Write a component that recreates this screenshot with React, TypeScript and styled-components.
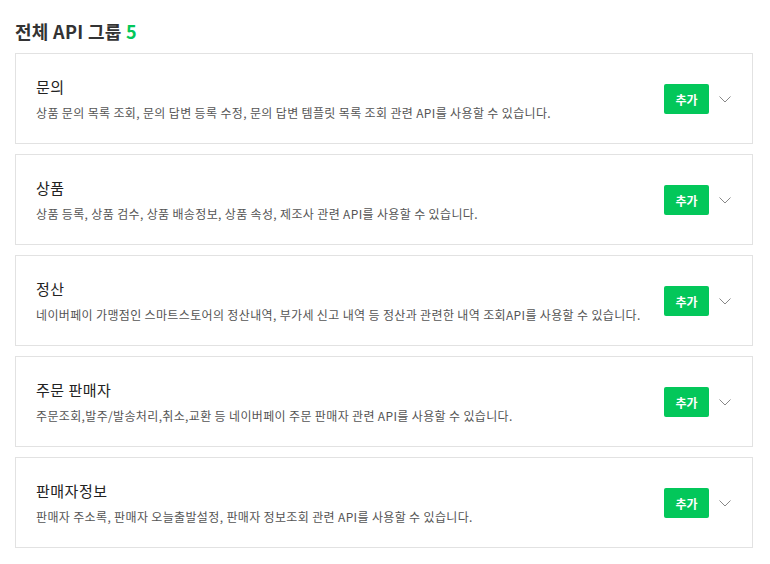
import React from 'react';
import styled, { createGlobalStyle } from 'styled-components';

const GlobalStyle = createGlobalStyle`
  html, body {
    margin: 0;
    padding: 0;
    background: #fff;
  }
  body {
    font-family: "Noto Sans CJK KR", "Noto Sans", sans-serif;
    color: #222;
  }
`;

const Page = styled.div`
  padding: 18px 17px 0 15px;
`;

const Heading = styled.h2`
  margin: 0 0 9px;
  font-size: 18px;
  line-height: 26px;
  font-weight: 700;
  color: #333;
  letter-spacing: 0.3px;
`;

const Count = styled.span`
  color: #03c75a;
`;

const List = styled.div`
  display: flex;
  flex-direction: column;
  gap: 10px;
`;

const Card = styled.div`
  display: flex;
  align-items: center;
  border: 1px solid #e2e2e2;
  padding: 22px 20px 21px 20px;
`;

const Info = styled.div`
  flex: 1;
  min-width: 0;
`;

const Title = styled.div`
  font-size: 15px;
  line-height: 22px;
  color: #222;
  letter-spacing: 0.5px;
`;

const Desc = styled.div`
  margin-top: 6px;
  font-size: 12px;
  line-height: 18px;
  color: #555;
  letter-spacing: 0.35px;
`;

const AddButton = styled.button`
  width: 45px;
  height: 30px;
  border: 0;
  border-radius: 2px;
  background: #03c75a;
  color: #fff;
  font-family: inherit;
  font-size: 12px;
  font-weight: 700;
  cursor: pointer;
  margin-left: 16px;
`;

const Toggle = styled.span`
  display: flex;
  align-items: center;
  justify-content: center;
  width: 15px;
  margin-left: 8px;
`;

const Chevron = () => (
  <svg width="12" height="7" viewBox="0 0 12 7" fill="none">
    <path d="M0.5 0.5L6 6L11.5 0.5" stroke="#888" strokeWidth="1" />
  </svg>
);

const groups = [
  { name: '문의', desc: '상품 문의 목록 조회, 문의 답변 등록 수정, 문의 답변 템플릿 목록 조회 관련 API를 사용할 수 있습니다.' },
  { name: '상품', desc: '상품 등록, 상품 검수, 상품 배송정보, 상품 속성, 제조사 관련 API를 사용할 수 있습니다.' },
  { name: '정산', desc: '네이버페이 가맹점인 스마트스토어의 정산내역, 부가세 신고 내역 등 정산과 관련한 내역 조회API를 사용할 수 있습니다.' },
  { name: '주문 판매자', desc: '주문조회,발주/발송처리,취소,교환 등 네이버페이 주문 판매자 관련 API를 사용할 수 있습니다.' },
  { name: '판매자정보', desc: '판매자 주소록, 판매자 오늘출발설정, 판매자 정보조회 관련 API를 사용할 수 있습니다.' },
];

const App = () => (
  <>
    <GlobalStyle />
    <Page>
      <Heading>
        전체 API 그룹 <Count>{groups.length}</Count>
      </Heading>
      <List>
        {groups.map((g) => (
          <Card key={g.name}>
            <Info>
              <Title>{g.name}</Title>
              <Desc>{g.desc}</Desc>
            </Info>
            <AddButton>추가</AddButton>
            <Toggle>
              <Chevron />
            </Toggle>
          </Card>
        ))}
      </List>
    </Page>
  </>
);

export default App;
